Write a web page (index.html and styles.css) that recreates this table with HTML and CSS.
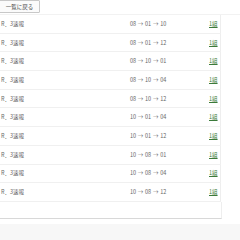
FILE: index.html
```html
<!DOCTYPE html>
<html lang="ja">
<head>
<meta charset="utf-8">
<link rel="stylesheet" href="styles.css">
</head>
<body>
<div class="page">
  <div class="top"><button class="back">一覧に戻る</button></div>
  <table class="list">
    <tr><td class="c1">R．3速報</td><td class="c2">08 → 01 → 10</td><td class="c3"><a href="#">1組</a></td></tr>
    <tr><td class="c1">R．3速報</td><td class="c2">08 → 01 → 12</td><td class="c3"><a href="#">1組</a></td></tr>
    <tr><td class="c1">R．3速報</td><td class="c2">08 → 10 → 01</td><td class="c3"><a href="#">1組</a></td></tr>
    <tr><td class="c1">R．3速報</td><td class="c2">08 → 10 → 04</td><td class="c3"><a href="#">1組</a></td></tr>
    <tr><td class="c1">R．3速報</td><td class="c2">08 → 10 → 12</td><td class="c3"><a href="#">1組</a></td></tr>
    <tr><td class="c1">R．3速報</td><td class="c2">10 → 01 → 04</td><td class="c3"><a href="#">1組</a></td></tr>
    <tr><td class="c1">R．3速報</td><td class="c2">10 → 01 → 12</td><td class="c3"><a href="#">1組</a></td></tr>
    <tr><td class="c1">R．3速報</td><td class="c2">10 → 08 → 01</td><td class="c3"><a href="#">1組</a></td></tr>
    <tr><td class="c1">R．3速報</td><td class="c2">10 → 08 → 04</td><td class="c3"><a href="#">1組</a></td></tr>
    <tr><td class="c1">R．3速報</td><td class="c2">10 → 08 → 12</td><td class="c3"><a href="#">1組</a></td></tr>
  </table>
  <div class="after"></div>
  <div class="footer"></div>
</div>
</body>
</html>
```
FILE: styles.css
```css
html, body {
  margin: 0;
  padding: 0;
  background: #fff;
}
body {
  font-family: "Noto Sans CJK JP", "Liberation Sans", sans-serif;
  font-size: 5.5px;
  color: #666;
}
.page {
  width: 240px;
  height: 240px;
  overflow: hidden;
}
.top {
  height: 14px;
  border-bottom: 1px solid #f2f2f2;
}
.back {
  margin-left: -1px;
  width: 41px;
  height: 13px;
  padding: 0;
  font: inherit;
  color: #444;
  background: #fbfbfb;
  border: 1px solid #c8c8c8;
  border-radius: 1px;
}
.list {
  width: 221px;
  border-collapse: collapse;
  border-right: 1px solid #eee;
}
.list td {
  height: 17.7px;
  padding: 0;
  border-bottom: 1px solid #f0f0f0;
  vertical-align: middle;
}
.c1 { width: 129px; padding-left: 1px !important; }
.c2 { width: 79px; word-spacing: 0.5px; }
.c3 a { color: #3a7a3a; text-decoration: underline; }
.after {
  width: 221px;
  height: 16px;
  border-right: 1px solid #eee;
  border-bottom: 1px solid #d8d8d8;
}
.footer {
  margin-top: 5px;
  height: 30px;
  background: #f7f7f7;
}
```
